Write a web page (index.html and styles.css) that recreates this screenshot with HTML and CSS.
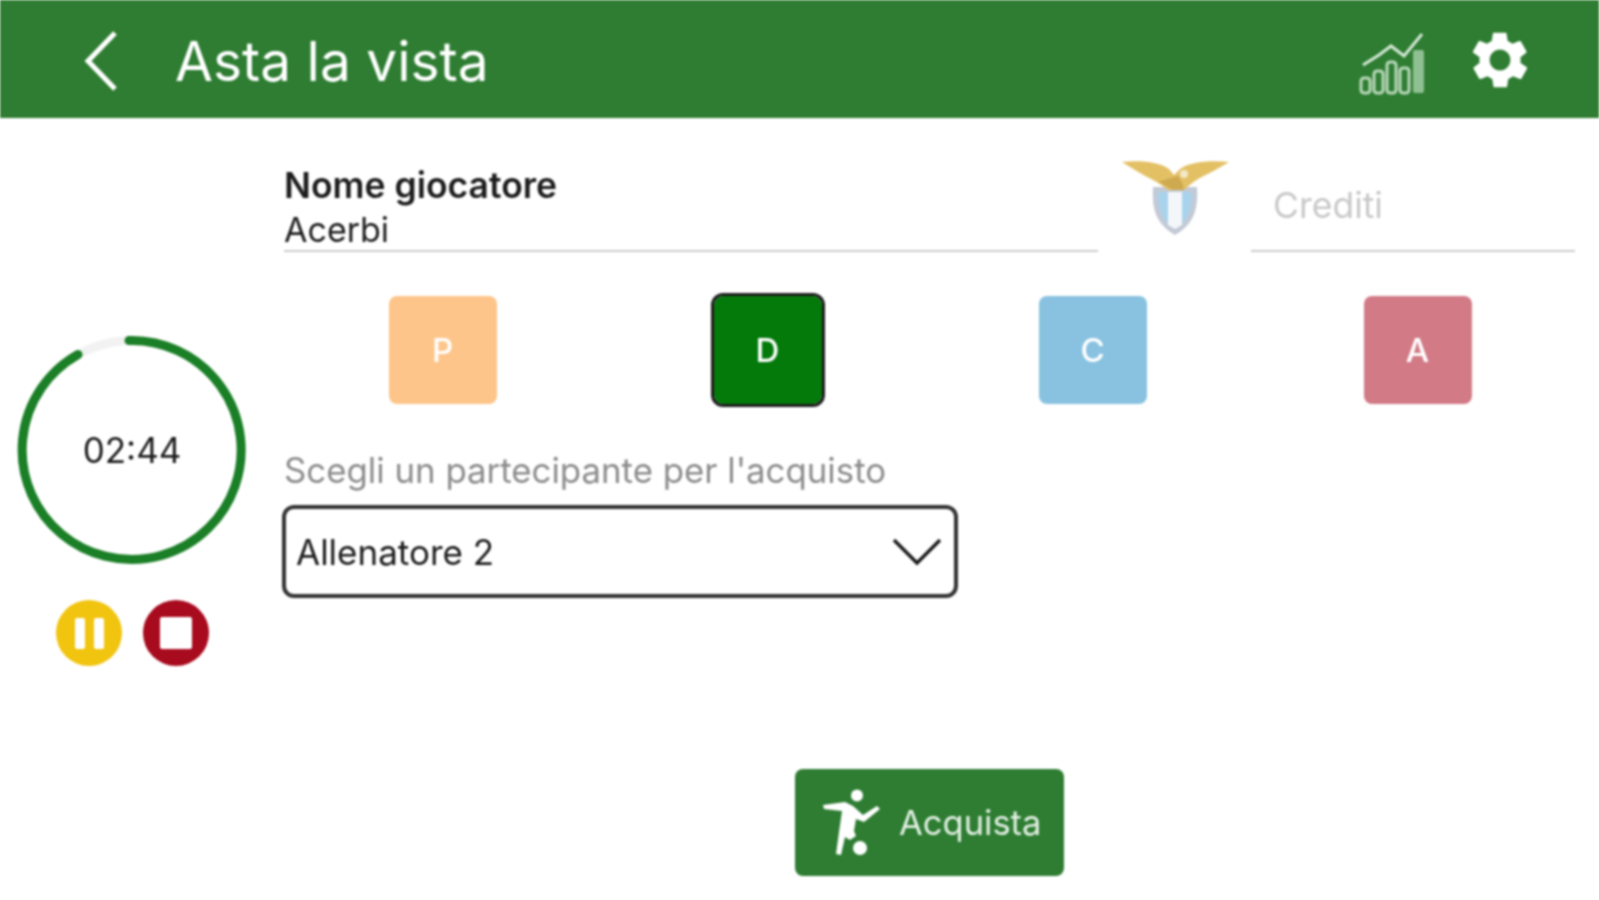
FILE: index.html
```html
<!DOCTYPE html>
<html lang="it">
<head>
  <meta charset="UTF-8" />
  <title>Asta la vista</title>
  <link rel="stylesheet" href="styles.css">
</head>
<body>
  <div class="app">
    <header class="topbar">
      <svg class="back" viewBox="0 0 34 60"><path d="M31 2 4 30l27 28" fill="none" stroke="#fff" stroke-width="5"/></svg>
      <h1 class="title">Asta la vista</h1>
      <svg class="chart" viewBox="0 0 68 64">
        <path d="M4 34 20 24 32 15 45 25 63 3" fill="none" stroke="#d5e8d6" stroke-width="3"/>
        <g fill="none" stroke="#b9d8ba" stroke-width="3">
          <rect x="2" y="47" width="9" height="15" rx="3"/>
          <rect x="15" y="40" width="9" height="22" rx="3"/>
          <rect x="28" y="31" width="9" height="31" rx="3"/>
          <rect x="41" y="37" width="9" height="25" rx="3"/>
        </g>
        <rect x="54" y="19" width="11" height="43" rx="2" fill="#8fc092"/>
      </svg>
      <svg class="gear" viewBox="0 0 24 24"><path fill="#fff" d="M19.4 13c.1-.3.1-.7.1-1s0-.7-.1-1l2.100-1.600c.2-.2.2-.4.1-.6l-2-3.500c-.1-.2-.4-.3-.6-.2l-2.500 1c-.5-.4-1.100-.7-1.700-1l-.4-2.600c0-.3-.2-.4-.5-.4h-4c-.3 0-.5.1-.5.4l-.4 2.600c-.6.3-1.200.6-1.700 1l-2.500-1c-.2-.1-.5 0-.6.2l-2 3.500c-.1.2-.1.4.1.6L4.600 11c-.1.3-.1.7-.1 1s0 .7.1 1l-2.100 1.600c-.2.2-.2.4-.1.6l2 3.500c.1.2.4.3.6.2l2.500-1c.5.4 1.100.7 1.700 1l.4 2.600c0 .3.2.4.5.4h4c.3 0 .5-.1.5-.4l.4-2.600c.6-.3 1.200-.6 1.700-1l2.500 1c.2.1.5 0 .6-.2l2-3.500c.1-.2.1-.4-.1-.6L19.400 13zM12 15.800a3.800 3.800 0 1 1 0-7.600 3.800 3.800 0 0 1 0 7.600z"/></svg>
    </header>

    <main class="content">
      <aside class="timer">
        <div class="ring">
          <svg viewBox="0 0 230 230">
            <circle cx="115" cy="115" r="109.500" fill="none" stroke="#f2f2f2" stroke-width="9"/>
            <path d="M112 5.500A109.500 109.500 0 1 1 61 19.500" fill="none" stroke="#1a7f26" stroke-width="9" stroke-linecap="round"/>
          </svg>
          <span class="time">02:44</span>
        </div>
        <div class="timer-btns">
          <span class="round-btn pause"><i></i><i></i></span>
          <span class="round-btn stop"><i></i></span>
        </div>
      </aside>

      <section class="form">
        <div class="top-row">
          <div class="field name-field">
            <label>Nome giocatore</label>
            <div class="value">Acerbi</div>
          </div>
          <svg class="crest" viewBox="0 0 107 76">
            <path d="M31 26h44c1 19-1 36-22 48C32 62 30 45 31 26z" fill="#c3cad6"/>
            <path d="M36 31h34c0 14-2 28-17 37C38 59 36 45 36 31z" fill="#a9d3ec"/>
            <path d="M46 31h14v33l-7 4-7-4z" fill="#f4f7fa"/>
            <path d="M0 1C18-1 38 1 47 8l5 6 6-6c9-7 30-9 49-7-10 6-21 12-31 17-5 3-10 7-14 11H46c-5-4-9-7-15-10C21 14 10 7 0 1z" fill="#e3c064"/>
            <path d="M36 21c6 2 10 5 14 8h12c-1-6-3-10-6-14l-4 1z" fill="#cfa94f"/>
            <circle cx="62" cy="13" r="4" fill="#f2e8c9"/>
          </svg>
          <div class="field credits-field">
            <div class="placeholder">Crediti</div>
          </div>
        </div>

        <div class="roles">
          <div class="role-cell"><span class="role role-p">P</span></div>
          <div class="role-cell"><span class="role role-d">D</span></div>
          <div class="role-cell"><span class="role role-c">C</span></div>
          <div class="role-cell"><span class="role role-a">A</span></div>
        </div>

        <p class="pick-label">Scegli un partecipante per l'acquisto</p>
        <div class="select">
          <span>Allenatore 2</span>
          <svg viewBox="0 0 50 30"><path d="M2 3 25 26 48 3" fill="none" stroke="#1c1c1c" stroke-width="3.500"/></svg>
        </div>

        <button class="buy">
          <svg viewBox="0 0 60 72">
            <circle cx="36" cy="8.500" r="6" fill="#fff"/>
            <path d="M2 18 24 15 32 19 42 28 56 19 59 22 43 35 35 32 33 44 35 49 29 53 24 50 20 68 15 67 18 45 21 24 3 22z" fill="#fff"/>
            <circle cx="39" cy="61" r="7" fill="#fff"/>
          </svg>
          <span>Acquista</span>
        </button>
      </section>
    </main>
  </div>
</body>
</html>
```

FILE: styles.css
```css
* {
  box-sizing: border-box;
}

html, body {
  margin: 0;
  height: 100%;
  overflow: hidden;
  background: #fff;
}

.app {
  height: 900px;
  font-family: Inter, 'Noto Sans', sans-serif;
  color: #1c1c1c;
  filter: blur(1px);
}

.topbar {
  height: 118px;
  background: #2e7d32;
  display: flex;
  align-items: center;
  padding: 3px 66px 0 84px;
}

.back {
  width: 34px;
  height: 60px;
}

.title {
  margin: 0 0 0 57px;
  flex: 1;
  font-size: 55px;
  font-weight: 400;
  color: #fff;
}

.chart {
  width: 68px;
  height: 64px;
  margin-top: 4px;
}

.gear {
  width: 66px;
  height: 66px;
  margin-left: 40px;
  margin-top: -2px;
}

.content {
  display: flex;
}

.timer {
  width: 284px;
  padding: 217px 0 0 17px;
}

.ring {
  position: relative;
  width: 230px;
  height: 230px;
}

.ring svg {
  display: block;
}

.time {
  position: absolute;
  inset: 0;
  display: flex;
  align-items: center;
  justify-content: center;
  font-size: 35px;
}

.timer-btns {
  display: flex;
  gap: 21px;
  margin-top: 35px;
  padding-left: 39px;
}

.round-btn {
  width: 66px;
  height: 66px;
  border-radius: 50%;
  display: flex;
  align-items: center;
  justify-content: center;
}

.pause {
  background: #f1c40f;
  gap: 9px;
}

.pause i {
  width: 10px;
  height: 31px;
  background: #fff;
  border-radius: 2px;
}

.stop {
  background: #a80a1e;
}

.stop i {
  width: 32px;
  height: 32px;
  background: #fff;
  border-radius: 2px;
}

.form {
  flex: 1;
}

.top-row {
  display: flex;
  padding: 43px 24px 0 0;
  height: 133px;
}

.field {
  height: 91px;
  border-bottom: 2px solid #ccc;
}

.name-field {
  width: 814px;
}

.name-field label {
  display: block;
  font-size: 35.500px;
  font-weight: 600;
  line-height: 46px;
  margin-top: 2px;
}

.value {
  font-size: 34px;
  line-height: 42px;
}

.crest {
  width: 107px;
  height: 76px;
  margin-left: 24px;
}

.credits-field {
  width: 324px;
  margin-left: 22px;
}

.placeholder {
  font-size: 35.500px;
  color: #c8c8c8;
  padding: 23px 0 0 22px;
}

.roles {
  display: grid;
  grid-template-columns: repeat(4, 325px);
  margin: 45px 0 0 -4px;
}

.role-cell {
  display: flex;
  justify-content: center;
}

.role {
  width: 108px;
  height: 108px;
  border-radius: 8px;
  color: #fff;
  font-size: 33px;
  font-weight: 500;
  display: flex;
  align-items: center;
  justify-content: center;
}

.role-p { background: #fdc58a; }
.role-d { background: #047a0a; outline: 3px solid #1c1c1c; border-radius: 9px; }
.role-c { background: #88c2e0; }
.role-a { background: #d27a86; }

.pick-label {
  margin: 43px 0 0;
  font-size: 34.800px;
  line-height: 46px;
  color: #8c8c8c;
}

.select {
  width: 676px;
  height: 93px;
  margin: 12px 0 0 -2px;
  border: 4px solid #333;
  border-radius: 12px;
  padding: 0 12px 0 10px;
  display: flex;
  align-items: center;
  justify-content: space-between;
  font-size: 35px;
}

.select svg {
  width: 50px;
  height: 30px;
}

.buy {
  display: flex;
  align-items: center;
  gap: 18px;
  width: 269px;
  height: 107px;
  margin: 171px 0 0 511px;
  padding: 0 0 0 26px;
  border: 0;
  border-radius: 8px;
  background: #2e7d32;
  color: #e4f0e5;
  font-family: inherit;
  font-size: 34.500px;
}

.buy svg {
  width: 60px;
  height: 72px;
}
```
